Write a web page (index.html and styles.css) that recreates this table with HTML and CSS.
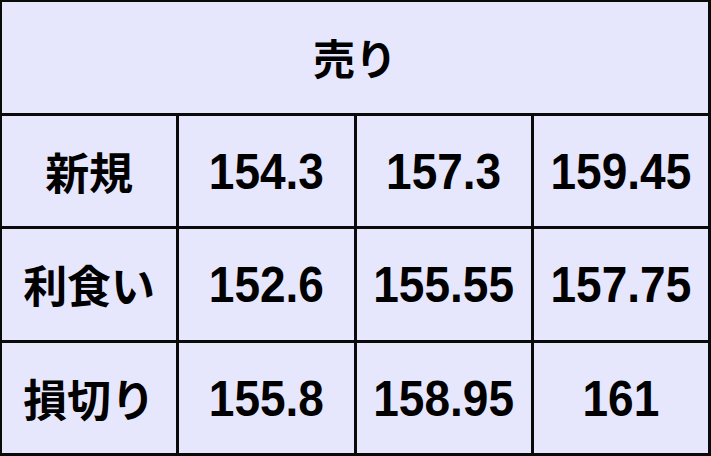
FILE: index.html
```html
<!DOCTYPE html>
<html lang="ja">
<head>
<meta charset="utf-8">
<title>売り</title>
<link rel="stylesheet" href="styles.css">
</head>
<body>
<div class="sheet">
  <div class="cell head">売り</div>
  <div class="cell label">新規</div>
  <div class="cell num"><span class="val">154.3</span></div>
  <div class="cell num"><span class="val">157.3</span></div>
  <div class="cell num"><span class="val">159.45</span></div>
  <div class="cell label">利食い</div>
  <div class="cell num"><span class="val">152.6</span></div>
  <div class="cell num"><span class="val">155.55</span></div>
  <div class="cell num"><span class="val">157.75</span></div>
  <div class="cell label">損切り</div>
  <div class="cell num"><span class="val">155.8</span></div>
  <div class="cell num"><span class="val">158.95</span></div>
  <div class="cell num"><span class="val">161</span></div>
</div>
</body>
</html>
```
FILE: styles.css
```css
html, body {
  margin: 0;
  padding: 0;
  background: #e6e6fa;
}
.sheet {
  box-sizing: border-box;
  width: 711px;
  height: 456px;
  display: grid;
  grid-template-columns: repeat(4, 1fr);
  grid-template-rows: repeat(4, 1fr);
  gap: 3px;
  padding: 2px 3px 3px 2px;
  background: #0a0a0a;
}
.cell {
  background: #e6e6fc;
  display: flex;
  align-items: center;
  justify-content: center;
  color: #000;
  line-height: 1;
}
.head {
  grid-column: 1 / span 4;
  font-family: "Noto Sans CJK JP", sans-serif;
  font-weight: 700;
  font-size: 42px;
}
.label {
  font-family: "Noto Sans CJK JP", sans-serif;
  font-weight: 700;
  font-size: 44px;
}
.num {
  font-family: "Liberation Sans", Arial, sans-serif;
  font-weight: bold;
  font-size: 46px;
}
.val {
  display: inline-block;
  transform: scaleY(1.08);
  margin-top: 2px;
}
```
